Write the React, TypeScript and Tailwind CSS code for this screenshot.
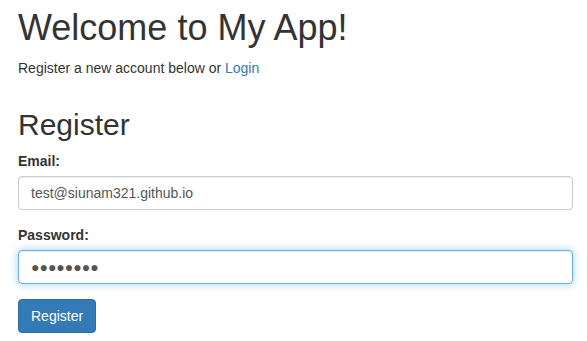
export default function App() {
  return (
    <main className="min-h-screen bg-white pt-[8px] pl-[18px] pr-[14px] font-['Liberation_Sans',Arial,sans-serif] text-[14px] leading-[20px] text-[#333]">
      <h1 className="mb-[10px] text-[36px] leading-[1.1] font-medium">Welcome to My App!</h1>
      <p className="mb-[10px]">
        Register a new account below or{" "}
        <a href="#" className="text-[#337ab7]">
          Login
        </a>
      </p>

      <h2 className="mt-[30px] mb-[10px] text-[30px] leading-[1.1] font-medium">Register</h2>

      <form onSubmit={(e) => e.preventDefault()}>
        <div className="mb-[15px]">
          <label className="mb-[5px] inline-block font-bold">Email:</label>
          <input
            type="email"
            readOnly
            value="test@siunam321.github.io"
            className="block h-[34px] w-full rounded-[4px] border border-[#ccc] bg-white px-[12px] py-[6px] text-[14px] text-[#555] shadow-[inset_0_1px_1px_rgba(0,0,0,0.075)] outline-none"
          />
        </div>

        <div className="mb-[15px]">
          <label className="mb-[5px] inline-block font-bold">Password:</label>
          {/* masked value shown as text so the dots keep their size */}
          <input
            type="text"
            readOnly
            value="●●●●●●●●"
            className="block h-[34px] w-full rounded-[4px] border border-[#66afe9] bg-white px-[12px] py-[6px] text-[14px] text-[#555] shadow-[inset_0_1px_1px_rgba(0,0,0,0.075),0_0_8px_rgba(102,175,233,0.6)] outline-none"
          />
        </div>

        <button
          type="submit"
          className="h-[34px] rounded-[4px] border border-[#2e6da4] bg-[#337ab7] px-[12px] py-[6px] text-[14px] leading-[20px] text-white"
        >
          Register
        </button>
      </form>
    </main>
  );
}
